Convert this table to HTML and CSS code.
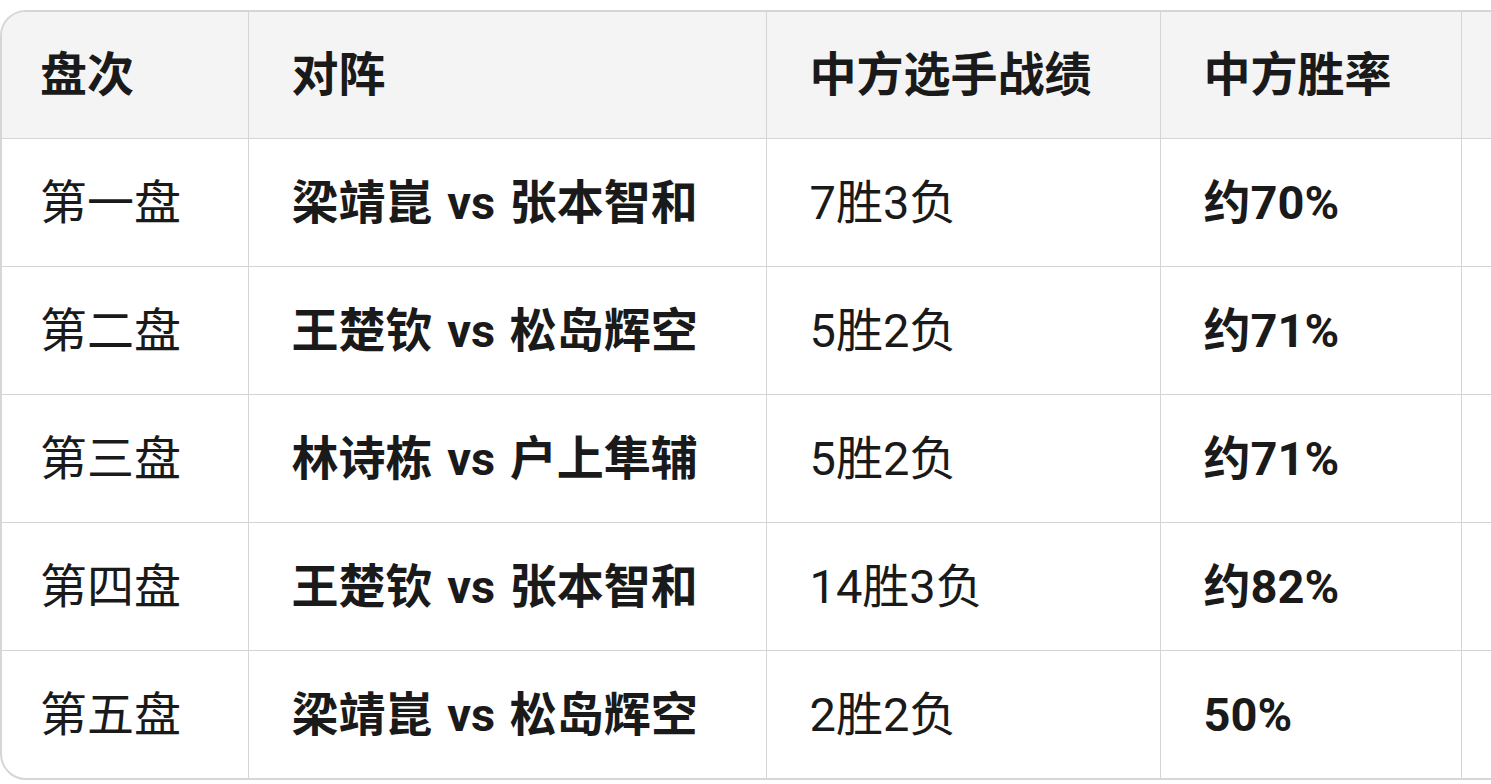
FILE: index.html
```html
<!DOCTYPE html>
<html lang="zh">
<head>
<meta charset="utf-8">
<link rel="stylesheet" href="styles.css">
</head>
<body>
<div class="wrap">
<table class="tbl">
<colgroup>
<col class="c1"><col class="c2"><col class="c3"><col class="c4"><col class="c5">
</colgroup>
<thead>
<tr><th>盘次</th><th>对阵</th><th>中方选手战绩</th><th>中方胜率</th><th></th></tr>
</thead>
<tbody>
<tr><td>第一盘</td><td class="b">梁靖崑 vs 张本智和</td><td>7胜3负</td><td class="b">约70%</td><td></td></tr>
<tr><td>第二盘</td><td class="b">王楚钦 vs 松岛辉空</td><td>5胜2负</td><td class="b">约71%</td><td></td></tr>
<tr><td>第三盘</td><td class="b">林诗栋 vs 户上隼辅</td><td>5胜2负</td><td class="b">约71%</td><td></td></tr>
<tr><td>第四盘</td><td class="b">王楚钦 vs 张本智和</td><td>14胜3负</td><td class="b">约82%</td><td></td></tr>
<tr><td>第五盘</td><td class="b">梁靖崑 vs 松岛辉空</td><td>2胜2负</td><td class="b">50%</td><td></td></tr>
</tbody>
</table>
</div>
</body>
</html>
```
FILE: styles.css
```css
html, body {
  margin: 0;
  padding: 0;
  background: #ffffff;
  overflow: hidden;
}
body {
  font-family: Roboto, "Noto Sans CJK SC", sans-serif;
  color: #1a1a1a;
}
.wrap {
  margin-top: 10px;
  width: 1760px;
  border: 2px solid #d6d6d6;
  border-radius: 26px;
  overflow: hidden;
}
.tbl {
  border-collapse: collapse;
  table-layout: fixed;
  width: 100%;
}
.c1 { width: 246px; }
.c2 { width: 518px; }
.c3 { width: 394px; }
.c4 { width: 301px; }
.tbl th, .tbl td {
  height: 128px;
  padding: 0 0 0 43px;
  text-align: left;
  font-size: 47px;
  line-height: 1;
  word-spacing: 3px;
  border-left: 1px solid #d4d4d4;
  border-top: 1px solid #d4d4d4;
  white-space: nowrap;
  box-sizing: border-box;
}
.tbl th:first-child, .tbl td:first-child {
  border-left: none;
  padding-left: 38px;
}
.tbl thead th {
  border-top: none;
  height: 126px;
  background: #f4f4f4;
  font-weight: 700;
}
.tbl td {
  font-weight: 400;
}
.tbl td.b {
  font-weight: 700;
}
```
